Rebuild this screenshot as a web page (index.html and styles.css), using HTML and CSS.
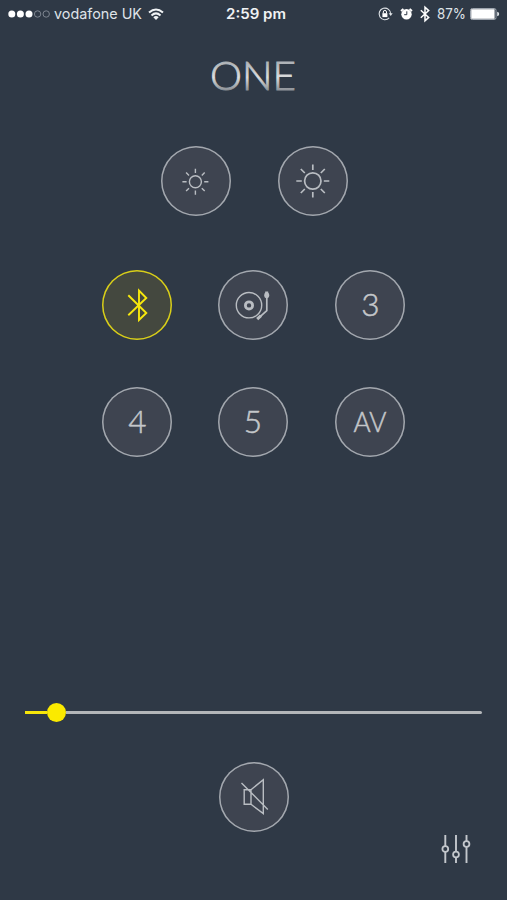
FILE: index.html
```
<!DOCTYPE html>
<html lang="en">
<head>
<meta charset="utf-8">
<meta name="viewport" content="width=device-width">
<title>ONE</title>
<link rel="stylesheet" href="styles.css">
</head>
<body>
<div class="app">
  <header class="status">
    <div class="status-left">
      <svg class="signal" width="42" height="10" viewBox="0 0 42 10"><g fill="#fff"><circle cx="3.8" cy="5" r="3.5"/><circle cx="12.4" cy="5" r="3.5"/><circle cx="21" cy="5" r="3.5"/></g><g fill="none" stroke="#7d8590"><circle cx="29.6" cy="5" r="3.2"/><circle cx="38.2" cy="5" r="3.2"/></g></svg>
      <svg class="carrier" width="89" height="20"><text x="0" y="15" textLength="88" lengthAdjust="spacingAndGlyphs">vodafone UK</text></svg>
      <svg class="wifi" width="16" height="13" viewBox="0 0 16 13"><g fill="none" stroke="#f1f3f5" stroke-width="2"><path d="M1 4.6Q8-1.6 15 4.6"/><path d="M3.5 7.4Q8 3.4 12.5 7.4"/></g><path d="M5.3 9.2Q8 7 10.7 9.2L8 12Z" fill="#f1f3f5"/></svg>
    </div>
    <svg class="time" width="61" height="20"><text x="0" y="15" textLength="60" lengthAdjust="spacingAndGlyphs">2:59 pm</text></svg>
    <div class="status-right">
      <svg width="15" height="14" viewBox="0 0 15 14"><path d="M11.2 10.8A5.8 5.8 0 1 1 12.7 7" fill="none" stroke="#dfe3e7" stroke-width="1.1"/><path d="M10.7 6.2h4l-2 2.8z" fill="#dfe3e7"/><rect x="4.4" y="6.2" width="5" height="3.9" fill="#fff"/><path d="M5.3 6.4V5a1.6 1.6 0 0 1 3.2 0v1.4" fill="none" stroke="#fff"/></svg>
      <svg class="alarm" width="13" height="14" viewBox="0 0 13 14"><circle cx="6.5" cy="7.2" r="5.2" fill="#fff"/><path d="M1 4L3.4 1.8M12 4L9.6 1.8" stroke="#fff" stroke-width="1.8"/><path d="M6.8 4.3v3.4H4.2" fill="none" stroke="#2f3946" stroke-width="1"/></svg>
      <svg class="bt" width="10" height="16" viewBox="0 0 10 16"><path d="M.8 4.2L8.7 11.4 5 14.8V1.2l3.7 3.4L.8 11.8" fill="none" stroke="#fff" stroke-width="1.5"/></svg>
      <svg class="percent" width="30" height="20"><text x="0" y="15" textLength="29" lengthAdjust="spacingAndGlyphs">87%</text></svg>
      <svg class="battery" width="30" height="12" viewBox="0 0 30 12"><rect x=".5" y=".5" width="25.5" height="11" rx="1.8" fill="none" stroke="#9da4ad"/><path d="M1.2 1.2h23.4v9.6H1.2z" fill="#fff"/><path d="M27.2 3.8q2 .4 2 2.2t-2 2.2z" fill="#dfe3e7"/></svg>
    </div>
  </header>

  <h1 class="title"><svg width="100" height="52"><defs><linearGradient id="metal" x1="0" y1="0" x2="0" y2="1"><stop offset=".2" stop-color="#a9aeb3"/><stop offset=".55" stop-color="#dcdedf"/><stop offset=".82" stop-color="#8d9298"/></linearGradient></defs><text x="5" y="38" fill="url(#metal)" stroke="url(#metal)" stroke-width=".8" textLength="86" lengthAdjust="spacingAndGlyphs">ONE</text></svg></h1>

  <main class="panel">
    <div class="brightness">
      <button class="round" aria-label="Dim"><svg viewBox="0 0 70 70"><g transform="translate(34.4 35.8)"><circle r="6"/><path d="M0-8.8V-13M0 8.8V13M-8.8 0H-13M8.8 0H13M6.4-6.4L9.3-9.3M-6.4-6.4L-9.3-9.3M6.4 6.4L9.3 9.3M-6.4 6.4L-9.3 9.3"/></g></svg></button>
      <button class="round" aria-label="Brighten"><svg viewBox="0 0 70 70"><g transform="translate(34.8 35)" stroke-width="1.7"><circle r="8.2"/><path d="M0-11V-16.5M0 11V16.5M-11 0H-16.5M11 0H16.5M8-8L12-12M-8-8L-12-12M8 8L12 12M-8 8L-12 12"/></g></svg></button>
    </div>
    <div class="sources">
      <button class="round active" aria-label="Bluetooth"><svg viewBox="0 0 70 70"><path d="M26.3 25.3L44.3 43 37 50V20.5L44.3 28 26.3 45.3" stroke-width="1.9"/></svg></button>
      <button class="round" aria-label="Turntable"><svg viewBox="0 0 70 70"><circle cx="31" cy="35.2" r="12.7"/><circle cx="31" cy="35.4" r="3.6" stroke-width="2.8"/><path d="M48.8 26V40.6L41 47.6" stroke-width="1.7"/><ellipse class="solid" cx="48.7" cy="25.2" rx="2.5" ry="3"/><path d="M48.7 21.5v2M43 45.7l-3.8 3.5" stroke-width="3"/></svg></button>
      <button class="round"><svg viewBox="0 0 70 70"><text x="35.3" y="46" font-size="31.5">3</text></svg></button>
      <button class="round"><svg viewBox="0 0 70 70"><text x="35.5" y="46" font-size="31.5">4</text></svg></button>
      <button class="round"><svg viewBox="0 0 70 70"><text x="35" y="46" font-size="31.5">5</text></svg></button>
      <button class="round"><svg viewBox="0 0 70 70"><text x="35" y="44.5" font-size="27" textLength="33" lengthAdjust="spacingAndGlyphs">AV</text></svg></button>
    </div>
  </main>

  <footer class="controls">
    <div class="slider"><span class="filled"></span><span class="thumb"></span><span class="remaining"></span></div>
    <button class="round mute" aria-label="Mute"><svg viewBox="0 0 70 70"><path d="M25.2 27.7H32V42.3H25.2ZM32 27.7L44.3 17.7V51.5L32 42.3M22.5 21L48.8 47.5"/></svg></button>
    <button class="settings" aria-label="Equaliser"><svg width="30" height="32" viewBox="0 0 30 32"><g fill="none" stroke="#c3c7cc" stroke-width="1.9"><path d="M4.3 2V13M4.3 19V30M15 2V18.5M15 24.5V30M25.5 2V8M25.5 14V30"/><g stroke-width="1.8"><circle cx="4.3" cy="16" r="2.9"/><circle cx="15" cy="21.5" r="2.9"/><circle cx="25.5" cy="11" r="2.9"/></g></g></svg></button>
  </footer>
</div>
</body>
</html>
```
FILE: styles.css
```
* { box-sizing: border-box; }
body { margin: 0; background: #2f3946; }
svg { display: block; flex: none; overflow: visible; }
button { padding: 0; border: 0; background: none; }
.app {
  width: 507px;
  height: 900px;
  overflow: hidden;
  display: flex;
  flex-direction: column;
  background: #2f3946;
}
.status {
  height: 28px;
  flex: none;
  display: flex;
  align-items: center;
  padding: 0 7px 0 8px;
  font-family: Inter, sans-serif;
  font-size: 14.5px;
}
.status text { fill: #dfe3e8; }
.status-left, .status-right { display: flex; align-items: center; }
.status-left { width: 218px; }
.carrier { margin-left: 4px; }
.wifi { margin-left: 5px; }
.time { font-weight: 600; }
.status .time text { fill: #f0f2f4; }
.status-right { flex: 1; justify-content: flex-end; }
.alarm { margin-left: 7px; }
.bt { margin-left: 7px; }
.percent { margin-left: 7px; }
.battery { margin-left: 3px; }
.title {
  margin: 24px 0 0 205px;
  height: 52px;
  font: 300 40px/52px Lato, sans-serif;
}
.panel { padding-top: 42px; }
.brightness { display: flex; gap: 47px; padding-left: 161px; }
.sources {
  display: grid;
  grid-template-columns: 116px 117px 70px;
  row-gap: 47.5px;
  margin-top: 53.5px;
  padding-left: 102px;
}
.round {
  width: 70px;
  height: 70px;
  border-radius: 50%;
  background: #3e4450;
  color: #b9bdc2;
  box-shadow: inset 0 0 0 1.5px #a3a8af;
  display: block;
}
.round svg {
  width: 70px;
  height: 70px;
  fill: none;
  stroke: currentColor;
  stroke-width: 1.4;
}
.round text {
  fill: #c4c7ca;
  stroke: #c4c7ca;
  stroke-width: .5;
  text-anchor: middle;
  font-family: Lato, sans-serif;
  font-weight: 300;
}
.round .solid { fill: currentColor; stroke: none; }
.active { color: #f7e80d; background: #44483f; box-shadow: inset 0 0 0 1.5px #d9cf19; }
.controls { margin-top: auto; height: 197px; display: flex; flex-direction: column; }
.slider { display: flex; align-items: center; height: 19px; margin: 0 25px; }
.filled { width: 22px; height: 3px; background: #f7e60a; }
.thumb { width: 19px; height: 19px; border-radius: 50%; background: #fbea00; }
.remaining { flex: 1; height: 3px; background: #b3b6b9; border-radius: 0 2px 2px 0; }
.mute { margin: 40px 0 0 219px; }
.settings { width: 30px; height: 32px; margin: 1px 0 0 441px; }
```
